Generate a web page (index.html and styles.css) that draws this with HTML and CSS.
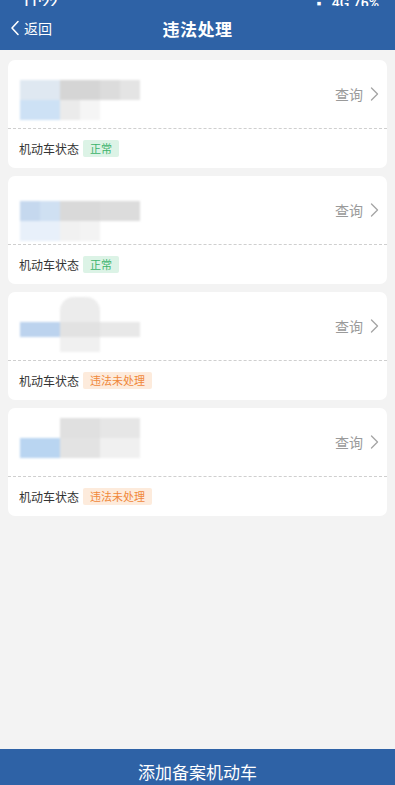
FILE: index.html
```html
<!DOCTYPE html>
<html lang="zh">
<head>
<meta charset="utf-8">
<title>违法处理</title>
<link rel="stylesheet" href="styles.css">
</head>
<body>
<div class="page">
  <header class="header">
    <div class="status">
      <span class="time">11:22</span>
      <span class="sicons">▪ &nbsp; 4G 76%</span>
    </div>
    <div class="nav">
      <div class="back">
        <svg width="10" height="16" viewBox="0 0 10 16"><path d="M8 1.5 L2 8 L8 14.5" fill="none" stroke="#fff" stroke-width="1.6" stroke-linecap="round" stroke-linejoin="round"/></svg>
        <span>返回</span>
      </div>
      <div class="title">违法处理</div>
      <div class="nav-side"></div>
    </div>
  </header>

  <main class="list">
    <div class="card">
      <div class="card-top">
        <div class="mosaic m1"><i class="a"></i><i class="b"></i><i class="c"></i><i class="d"></i><i class="e"></i><i class="f"></i><i class="g"></i></div>
        <div class="query">查询<svg width="9" height="14" viewBox="0 0 9 14"><path d="M1.5 1 L7.5 7 L1.5 13" fill="none" stroke="#a6a6a6" stroke-width="1.4" stroke-linecap="round" stroke-linejoin="round"/></svg></div>
      </div>
      <div class="card-bottom">
        <span class="label">机动车状态</span><span class="tag ok">正常</span>
      </div>
    </div>

    <div class="card">
      <div class="card-top">
        <div class="mosaic m2"><i class="a"></i><i class="b"></i><i class="c"></i><i class="d"></i><i class="e"></i><i class="f"></i><i class="g"></i></div>
        <div class="query">查询<svg width="9" height="14" viewBox="0 0 9 14"><path d="M1.5 1 L7.5 7 L1.5 13" fill="none" stroke="#a6a6a6" stroke-width="1.4" stroke-linecap="round" stroke-linejoin="round"/></svg></div>
      </div>
      <div class="card-bottom">
        <span class="label">机动车状态</span><span class="tag ok">正常</span>
      </div>
    </div>

    <div class="card">
      <div class="card-top">
        <div class="mosaic m3"><i class="a"></i><i class="b"></i><i class="c"></i><i class="d"></i><i class="e"></i></div>
        <div class="query">查询<svg width="9" height="14" viewBox="0 0 9 14"><path d="M1.5 1 L7.5 7 L1.5 13" fill="none" stroke="#a6a6a6" stroke-width="1.4" stroke-linecap="round" stroke-linejoin="round"/></svg></div>
      </div>
      <div class="card-bottom">
        <span class="label">机动车状态</span><span class="tag warn">违法未处理</span>
      </div>
    </div>

    <div class="card">
      <div class="card-top">
        <div class="mosaic m4"><i class="a"></i><i class="b"></i><i class="c"></i><i class="d"></i><i class="e"></i></div>
        <div class="query">查询<svg width="9" height="14" viewBox="0 0 9 14"><path d="M1.5 1 L7.5 7 L1.5 13" fill="none" stroke="#a6a6a6" stroke-width="1.4" stroke-linecap="round" stroke-linejoin="round"/></svg></div>
      </div>
      <div class="card-bottom">
        <span class="label">机动车状态</span><span class="tag warn">违法未处理</span>
      </div>
    </div>
  </main>

  <footer class="footer">添加备案机动车</footer>
</div>
</body>
</html>
```

FILE: styles.css
```css
* { box-sizing: border-box; margin: 0; padding: 0; }

html, body {
  width: 395px;
  height: 785px;
  overflow: hidden;
}

body {
  background: #f3f3f3;
  font-family: "Noto Sans CJK SC", "Noto Sans", sans-serif;
  color: #333;
}

.page {
  display: flex;
  flex-direction: column;
  height: 785px;
}

.header {
  background: #2e62a6;
  color: #fff;
  flex: none;
}

.status {
  height: 6px;
  overflow: hidden;
  display: flex;
  align-items: flex-end;
  justify-content: space-between;
  padding: 0 16px 0 22px;
  font-family: "Roboto", sans-serif;
  font-size: 14px;
  font-weight: 500;
}

.status span {
  line-height: 13px;
  display: block;
  transform: translateY(4px);
}

.nav {
  height: 44px;
  display: flex;
  align-items: center;
  padding: 0 10px;
}

.back {
  width: 80px;
  display: flex;
  align-items: center;
  gap: 4px;
  font-size: 14px;
}

.back svg { display: block; }

.title {
  flex: 1;
  text-align: center;
  font-size: 17px;
  font-weight: 700;
  letter-spacing: 0.5px;
}

.nav-side { width: 80px; }

.list {
  flex: 1;
  padding: 10px 8px 0;
  display: flex;
  flex-direction: column;
  gap: 8px;
}

.card {
  background: #fff;
  border-radius: 7px;
  height: 108px;
  display: flex;
  flex-direction: column;
}

.card-top {
  height: 69px;
  display: flex;
  align-items: center;
  justify-content: space-between;
  padding: 0 8px 0 12px;
  border-bottom: 1px dashed #cfcfcf;
}

.mosaic {
  align-self: flex-start;
  width: 120px;
  height: 68px;
  display: grid;
  grid-template-columns: repeat(6, 20px);
  grid-template-rows: repeat(14, 5px);
  filter: blur(0.8px);
}

.mosaic i { display: block; }

.m1 .a { grid-area: 5 / 1 / 9 / 3; background: #dfe8f1; }
.m1 .b { grid-area: 5 / 3 / 9 / 5; background: #d5d5d5; }
.m1 .c { grid-area: 5 / 5 / 9 / 6; background: #dcdcdc; }
.m1 .d { grid-area: 5 / 6 / 9 / 7; background: #e4e4e4; }
.m1 .e { grid-area: 9 / 1 / 13 / 3; background: #cde1f5; }
.m1 .f { grid-area: 9 / 3 / 13 / 4; background: #ebebeb; }
.m1 .g { grid-area: 9 / 4 / 13 / 5; background: #f5f5f5; }

.m2 .a { grid-area: 6 / 1 / 10 / 2; background: #c5d8ee; }
.m2 .b { grid-area: 6 / 2 / 10 / 3; background: #cfe0f2; }
.m2 .c { grid-area: 6 / 3 / 10 / 5; background: #d9d9d9; }
.m2 .d { grid-area: 6 / 5 / 10 / 7; background: #dcdcdc; }
.m2 .e { grid-area: 10 / 1 / 14 / 3; background: #e8f0fa; }
.m2 .f { grid-area: 10 / 3 / 14 / 4; background: #f1f1f1; }
.m2 .g { grid-area: 10 / 4 / 14 / 5; background: #f3f3f3; }

.m3 .a { grid-area: 2 / 3 / 7 / 5; background: #ececec; border-radius: 14px 14px 0 0; }
.m3 .b { grid-area: 7 / 1 / 10 / 3; background: #bcd3ee; }
.m3 .c { grid-area: 7 / 3 / 10 / 5; background: #e2e2e2; }
.m3 .d { grid-area: 7 / 5 / 10 / 7; background: #e8e8e8; }
.m3 .e { grid-area: 10 / 3 / 13 / 5; background: #f0f0f0; }

.m4 .a { grid-area: 3 / 3 / 7 / 5; background: #e0e0e0; }
.m4 .b { grid-area: 3 / 5 / 7 / 7; background: #e6e6e6; }
.m4 .c { grid-area: 7 / 1 / 11 / 3; background: #b9d5f1; }
.m4 .d { grid-area: 7 / 3 / 11 / 5; background: #e3e3e3; }
.m4 .e { grid-area: 7 / 5 / 11 / 7; background: #f0f0f0; }

.query {
  display: flex;
  align-items: center;
  gap: 7px;
  font-size: 14px;
  color: #9a9a9a;
}

.query svg { display: block; }

.card-bottom {
  flex: 1;
  display: flex;
  align-items: center;
  padding: 0 11px;
  gap: 4px;
}

.label {
  font-size: 12px;
  color: #333;
}

.tag {
  font-size: 11px;
  line-height: 17px;
  height: 17px;
  padding: 0 7px;
  border-radius: 2px;
}

.tag.ok {
  background: #dcf3e6;
  color: #3db36b;
}

.tag.warn {
  background: #fdebdc;
  color: #f0883a;
}

.footer {
  flex: none;
  height: 36px;
  background: #2e62a6;
  color: #fff;
  text-align: center;
  font-size: 17px;
  line-height: 22px;
  padding-top: 12px;
}
```
